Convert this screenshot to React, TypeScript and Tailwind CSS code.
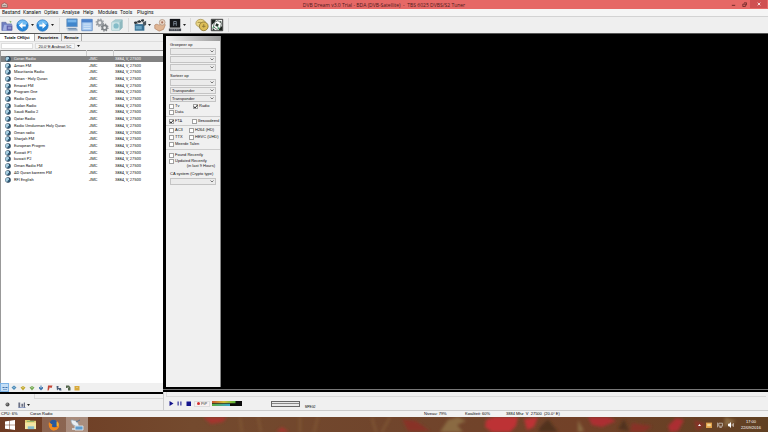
import React from "react";
import { clsx } from "clsx";

const menuItems = [
  { label: "Bestand", width: "w-[21px]" },
  { label: "Kanalen", width: "w-[21px]" },
  { label: "Opties", width: "w-[18px]" },
  { label: "Analyse", width: "w-[21px]" },
  { label: "Help", width: "w-[15px]" },
  { label: "Modules", width: "w-[22px]" },
  { label: "Tools", width: "w-[17px]" },
  { label: "Plugins", width: "w-[20px]" },
];

const channels = [
  "Coran Radio",
  "Aman FM",
  "Mauritania Radio",
  "Oman - Holy Quran",
  "Emarat FM",
  "Program One",
  "Radio Quran",
  "Sudan Radio",
  "Saudi Radio 2",
  "Qatar Radio",
  "Radio Umdurman Holy Quran",
  "Oman radio",
  "Sharjah FM",
  "European Progrm",
  "Kuwait P1",
  "kuwait P2",
  "Oman Radio FM",
  "AD Quran kareem FM",
  "RFI English",
];

/* ---------- toolbar drawings ---------- */

function FolderIcon() {
  return (
    <svg viewBox="0 0 16 16" className="size-[13px]">
      <path d="M1 4h5l1 2h6v8H1z" fill="#6f7fc0" stroke="#56639c" strokeWidth=".7" />
      <path d="M4 7h10l-2 7H2z" fill="#a3b0e2" />
      <path d="M7 8h7v6H7z" fill="#5f62ac" />
      <path d="M8.500 9.500h4v3h-4z" fill="#8f93cc" />
      <path d="M10 2l3 1-1 2z" fill="#78b25a" />
    </svg>
  );
}

function ArrowIcon({ forward }: { forward?: boolean }) {
  return (
    <svg viewBox="0 0 16 16" className="size-[13px]">
      <circle cx="8" cy="8" r="7" fill="#2786d8" stroke="#2a73ba" strokeWidth=".8" />
      <path d="M2 6a6.300 6.300 0 0 1 12 0c-4 1.500-8 1.500-12 0z" fill="#6dbaf2" />
      <path
        d={forward ? "M4 6.700h4V4l4.500 4L8 12V9.300H4z" : "M12 6.700H8V4L3.500 8 8 12V9.300h4z"}
        fill="#fff"
      />
    </svg>
  );
}

function MonitorsIcon() {
  return (
    <svg viewBox="0 0 16 16" className="size-[14px]">
      <path d="M2 1h12v9H2z" fill="#3f86cc" stroke="#7297bb" strokeWidth=".8" />
      <path d="M3 2h10v3H3z" fill="#76b4ea" />
      <path d="M1 11h13l1 4H3z" fill="#c9d6e4" />
      <path d="M3 12h10M4 13.500h10" stroke="#53799f" strokeWidth=".8" />
    </svg>
  );
}

function ListIcon() {
  return (
    <svg viewBox="0 0 16 16" className="size-[14px]">
      <path d="M2 1.500h12v13H2z" fill="#a9cbf0" stroke="#5c86c0" strokeWidth=".9" />
      <path d="M2 1.500h12V5H2z" fill="#4d83cc" />
      <path d="M4 7h8M4 9.500h8M4 12h8" stroke="#d5e6f8" />
    </svg>
  );
}

function GearsIcon() {
  return (
    <svg viewBox="0 0 16 16" className="size-[14px]">
      <g fill="none" stroke="#9a9ea2">
        <circle cx="5.500" cy="5.500" r="2.700" strokeWidth="2" />
        <circle cx="5.500" cy="5.500" r="4.200" strokeWidth="1.400" strokeDasharray="1.600 1.700" />
        <circle cx="11" cy="11" r="2.500" strokeWidth="2" stroke="#7e8387" />
        <circle cx="11" cy="11" r="3.900" strokeWidth="1.400" strokeDasharray="1.500 1.560" stroke="#7e8387" />
      </g>
    </svg>
  );
}

function CubeIcon() {
  return (
    <svg viewBox="0 0 16 16" className="size-[14px]">
      <path d="M2 5l4-3h8v9l-3 3H2z" fill="#a9cfd4" stroke="#8fb5bc" strokeWidth=".7" />
      <path d="M2 5h9v9H2z" fill="#cde4e6" />
      <circle cx="7" cy="9" r="3" fill="#83bcc8" />
      <path d="M11 5l3-3v9l-3 3z" fill="#8fb9bf" />
    </svg>
  );
}

function ClapperIcon() {
  return (
    <svg viewBox="0 0 16 16" className="size-[14px]">
      <path d="M1 4.500L12 1l.8 2.600L2 7z" fill="#2d3338" />
      <path d="M4 3.600l2 2M8 2.300l2 2" stroke="#eee" />
      <path d="M2 7h11v7.500H2z" fill="#376f93" />
      <path d="M3 9h7v4H3z" fill="#6ea6c4" />
      <path d="M11 5l4-2v5l-3 1z" fill="#4b565e" />
    </svg>
  );
}

function HandIcon() {
  return (
    <svg viewBox="0 0 16 16" className="size-[14px]">
      <path d="M2 8c2-2 4 0 5 0l5-4 2 4-2 5-5 2-5-3z" fill="#dfb492" stroke="#ab7c5c" strokeWidth=".7" />
      <circle cx="10.500" cy="5" r="3.300" fill="#ead6c6" stroke="#a98e78" strokeWidth=".8" />
      <circle cx="10.500" cy="5" r="1.200" fill="#a8705a" />
    </svg>
  );
}

function ScreenIcon() {
  return (
    <svg viewBox="0 0 16 16" className="size-[14px]">
      <path d="M2 1h12v10H2z" fill="#15171b" />
      <path d="M6.500 9V4h3v5M6.500 6.500h3" fill="none" stroke="#7d8896" />
      <path d="M1 12h14v3H1z" fill="#43474e" />
      <path d="M3 13.500h10" stroke="#aeb4bb" strokeDasharray="1 1" />
    </svg>
  );
}

function DiscIcon() {
  return (
    <svg viewBox="0 0 16 16" className="size-[14px]">
      <ellipse cx="6.500" cy="6" rx="5.500" ry="4.500" fill="#ead583" stroke="#a08b48" strokeWidth=".8" />
      <circle cx="10" cy="9.500" r="5" fill="#dcbd56" stroke="#84702e" strokeWidth=".9" />
      <path d="M8 9.500h4M10 7v4" stroke="#8b7636" />
      <path d="M3 5h4" stroke="#a18a3e" />
    </svg>
  );
}

function BallIcon() {
  return (
    <svg viewBox="0 0 16 16" className="size-[14px]">
      <path d="M1.500 1.500h13v13h-13z" fill="#f2f4f2" stroke="#222" />
      <path d="M2 2h5L5 5 2 8zM14 14h-4l1-3 3-2z" fill="#1e2420" />
      <path d="M5 5l4-2 4 3-1 5-4 2-4-3z" fill="#fff" stroke="#2c3a32" strokeWidth=".8" />
      <path d="M7 6l3 1-1 3-3-1zM11 3l2 1v2zM3 11l3 3H3z" fill="#26352c" />
      <path d="M5 10l-2 1M9 10l1 3" stroke="#3b9d5c" strokeWidth="1.200" />
    </svg>
  );
}

function GlobeIcon() {
  return (
    <svg viewBox="0 0 12 12" className="size-[6px]">
      <circle cx="6" cy="6" r="5.500" fill="#1e3a52" />
      <path d="M1 6c0-4 5-6 7-3S6 6 5 9 1 8 1 6z" fill="#a7cfe2" />
      <circle cx="8" cy="8" r="1.500" fill="#4486a8" />
    </svg>
  );
}

function ToolButton({ label, children }: { label: string; children: React.ReactNode }) {
  return (
    <button type="button" aria-label={label} className="flex w-[15px] shrink-0 items-center justify-center">
      {children}
    </button>
  );
}

function DropArrow({ label }: { label: string }) {
  return (
    <button type="button" aria-label={label} className="flex w-[5px] shrink-0 items-center justify-center">
      <svg viewBox="0 0 6 4" className="h-[2px] w-[3px]">
        <path d="M0 0h6L3 4z" fill="#222" />
      </svg>
    </button>
  );
}

function Separator({ width }: { width: string }) {
  return (
    <div className={clsx("flex shrink-0 justify-center py-px", width)}>
      <div className="w-px bg-[#dadada]" />
    </div>
  );
}

/* ---------- window parts ---------- */

function TitleBar() {
  return (
    <header className="grid h-[9px] shrink-0 grid-cols-[1fr_auto_1fr] items-center bg-[#e66866]">
      <svg viewBox="0 0 12 10" className="ml-px h-[6px] w-[7px]">
        <path d="M1 4l5-3 5 3v5H1z" fill="#d9c5bd" stroke="#7e5450" />
        <path d="M3 6h6" stroke="#555" />
      </svg>
      <h1 className="whitespace-pre font-['Open_Sans',sans-serif] text-[5px] leading-[8px] text-[#4c1a1a]">
        {"DVB Dream v3.0 Trial - BDA (DVB-Satellite)  -  TBS 6025 DVBS/S2 Tuner"}
      </h1>
      <div className="flex h-[8px] items-center justify-self-end self-start">
        <button type="button" aria-label="Minimize" className="flex w-[12px] justify-center">
          <svg viewBox="0 0 6 6" className="size-[5px]">
            <path d="M1 4h4" stroke="#5a1f1f" />
          </svg>
        </button>
        <button type="button" aria-label="Restore" className="flex w-[11px] justify-center">
          <svg viewBox="0 0 6 6" className="size-[5px]">
            <path d="M1 2.500h3v3H1zM2.500 1h3v3" fill="none" stroke="#5a1f1f" strokeWidth=".9" />
          </svg>
        </button>
        <button type="button" aria-label="Close" className="mr-px flex h-[8px] w-[17px] items-center justify-center bg-[#cf5052]">
          <svg viewBox="0 0 6 6" className="size-[4px]">
            <path d="M1 1l4 4M5 1L1 5" stroke="#f6dada" strokeWidth="1.500" />
          </svg>
        </button>
      </div>
    </header>
  );
}

function MenuBar() {
  return (
    <nav className="flex h-[8px] shrink-0 items-center border-b border-[#d3d3d3] bg-[#f5f5f5] pl-[2px] font-[Roboto,sans-serif] text-[5px] leading-[7px] text-[#111]">
      {menuItems.map((item) => (
        <button type="button" key={item.label} className={clsx("shrink-0 text-left", item.width)}>
          {item.label}
        </button>
      ))}
    </nav>
  );
}

function ToolBar() {
  return (
    <div className="flex h-[17px] shrink-0 items-stretch border-b border-[#555] bg-[#efefef]">
      <ToolButton label="Open"><FolderIcon /></ToolButton>
      <ToolButton label="Back"><ArrowIcon /></ToolButton>
      <DropArrow label="Back history" />
      <ToolButton label="Forward"><ArrowIcon forward /></ToolButton>
      <DropArrow label="Forward history" />
      <Separator width="w-[9px]" />
      <ToolButton label="View"><MonitorsIcon /></ToolButton>
      <ToolButton label="Channel list"><ListIcon /></ToolButton>
      <ToolButton label="Settings"><GearsIcon /></ToolButton>
      <ToolButton label="Modules"><CubeIcon /></ToolButton>
      <Separator width="w-[8px]" />
      <ToolButton label="Record"><ClapperIcon /></ToolButton>
      <DropArrow label="Record options" />
      <ToolButton label="Scan"><HandIcon /></ToolButton>
      <ToolButton label="Screen"><ScreenIcon /></ToolButton>
      <DropArrow label="Screen options" />
      <Separator width="w-[7px]" />
      <ToolButton label="Satellite"><DiscIcon /></ToolButton>
      <ToolButton label="Sport"><BallIcon /></ToolButton>
      <Separator width="w-[9px]" />
    </div>
  );
}

function ChannelTable() {
  return (
    <div className="flex-1 border-l border-[#999] bg-white">
      <table className="h-[133px] w-full table-fixed border-collapse font-[Roboto,sans-serif] text-[4px] leading-[6px] text-[#111]">
        <colgroup>
          <col className="w-[85px]" />
          <col className="w-[27px]" />
          <col />
        </colgroup>
        <thead>
          <tr className="h-[5px] border-t border-[#888] bg-[#f1f1f1]">
            <th aria-label="Naam" className="border-r border-[#ccc] p-0" />
            <th aria-label="Provider" className="border-r border-[#ccc] p-0" />
            <th aria-label="Transponder" className="p-0" />
          </tr>
        </thead>
        <tbody>
          {channels.map((name, i) => (
            <tr key={name} className={clsx(i === 0 && "bg-[#828282] text-[#f2f2f2]")}>
              <td className="p-0 pl-[4px]">
                <div className="flex items-center gap-[3px] whitespace-nowrap">
                  <GlobeIcon />
                  {name}
                </div>
              </td>
              <td className="p-0 pl-[3px]">JMC</td>
              <td className="p-0 pl-[2px]">3884, V, 27500</td>
            </tr>
          ))}
        </tbody>
      </table>
    </div>
  );
}

const listTools = [
  { label: "Lijst", shape: "M1 4h10v2H1zM2 8h8v1H2z", color: "#3e73b0" },
  { label: "Blauw", shape: "M1 5l5-4 5 4-5 5z", color: "#4e8dba" },
  { label: "Geel", shape: "M1 5l5-3 5 3-5 6z", color: "#c2a82e" },
  { label: "Groen", shape: "M1 5l5-3 5 3-5 6z", color: "#75aa54" },
  { label: "Info", shape: "M5 1h2v3h3v3l-4 4-4-4V4h3z", color: "#4277ae" },
  { label: "Vlag", shape: "M2 1h9L9 6H5l-2 5H1z", color: "#c34536" },
  { label: "Zoek", shape: "M1 2h4v4h5l1 5H7L5 8l-3 3z", color: "#4a5d78" },
  { label: "Document", shape: "M2 1h6l3 4v6H6V6H2z", color: "#54664c" },
  { label: "Map", shape: "M1 2h10v9H1z", color: "#d8aa3c" },
];

function ChannelPanel() {
  return (
    <section className="flex w-[163px] shrink-0 flex-col bg-[#f0f0f0]">
      <div role="tablist" className="flex h-[8px] shrink-0 items-stretch border-b border-[#ddd] text-[4px] font-bold leading-[7px] text-black">
        <button type="button" role="tab" aria-selected="true" className="w-[35px] border-r border-[#aaa] bg-white">
          Totale CHlijst
        </button>
        <button type="button" role="tab" aria-selected="false" className="w-[27px] border-r border-[#aaa]">
          Favorieten
        </button>
        <button type="button" role="tab" aria-selected="false" className="w-[20px] border-r border-[#aaa]">
          Remote
        </button>
      </div>
      <div className="flex h-[8px] shrink-0 items-center gap-[2px] pl-px text-[4px] leading-[6px] text-[#111]">
        <input type="text" aria-label="Zoeken" className="h-[6px] w-[32px] border border-[#ddd] bg-white p-0" />
        <button type="button" className="h-[6px] w-[40px] border border-[#ddd] bg-[#f6f6f6] leading-[5px] whitespace-nowrap">
          20.0°E Arabsat 5C
        </button>
        <svg viewBox="0 0 6 4" className="h-[2px] w-[3px]">
          <path d="M0 0h6L3 4z" fill="#222" />
        </svg>
      </div>
      <ChannelTable />
      <div className="flex h-[9px] shrink-0 items-start">
        {listTools.map((tool, i) => (
          <button
            type="button"
            key={tool.label}
            aria-label={tool.label}
            className={clsx(
              "flex size-[9px] shrink-0 items-center justify-center",
              i === 0 && "border border-[#7eb4e6] bg-[#c4def5]"
            )}
          >
            <svg viewBox="0 0 12 12" className="size-[6px]">
              <path d={tool.shape} fill={tool.color} />
              <path d="M4 5h4" stroke="#fff" strokeOpacity=".6" />
            </svg>
          </button>
        ))}
      </div>
      <div className="h-[2px] shrink-0 bg-black" />
      <div className="flex h-[16px] shrink-0 flex-col">
        <div className="ml-[34px] h-[5px] border-b border-l border-[#d8d8d8]" />
        <div className="flex flex-1 items-center gap-[8px] pl-[5px]">
          <button type="button" aria-label="Volume">
            <svg viewBox="0 0 10 10" className="size-[5px]">
              <circle cx="5" cy="5" r="4" fill="#555" />
              <circle cx="4" cy="4" r="1.500" fill="#bbb" />
            </svg>
          </button>
          <button type="button" aria-label="Audio" className="flex items-center gap-px">
            <svg viewBox="0 0 12 10" className="h-[6px] w-[8px]">
              <path d="M0 1h3v8H0zM5 3h3v5H5zM9 1h2v8H9z" fill="#6a7084" />
              <path d="M0 9.500h12" stroke="#3b57a0" />
            </svg>
            <svg viewBox="0 0 6 4" className="h-[2px] w-[3px]">
              <path d="M0 0h6L3 4z" fill="#222" />
            </svg>
          </button>
        </div>
      </div>
    </section>
  );
}

function FilterSelect({ label, value = "" }: { label: string; value?: string }) {
  return (
    <div className="grid h-[8px] items-center pb-px">
      <select
        aria-label={label}
        className="col-start-1 row-start-1 h-[7px] w-full appearance-none border border-[#c4c4c4] bg-[#ebebeb] py-0 pl-px text-[4px] leading-[5px]"
      >
        <option>{value}</option>
      </select>
      <svg viewBox="0 0 8 6" className="pointer-events-none col-start-1 row-start-1 mr-[2px] h-[3px] w-[4px] justify-self-end">
        <path d="M1 1l3 3 3-3" fill="none" stroke="#444" strokeWidth="1.400" />
      </svg>
    </div>
  );
}

function Check({ label, checked }: { label: string; checked?: boolean }) {
  return (
    <label className="flex items-center gap-px whitespace-nowrap">
      <span className="grid size-[5px] shrink-0">
        <input
          type="checkbox"
          defaultChecked={checked}
          className="peer col-start-1 row-start-1 size-[5px] appearance-none border border-[#a0a0a0] bg-white"
        />
        <svg viewBox="0 0 10 10" className="pointer-events-none invisible col-start-1 row-start-1 size-[5px] peer-checked:visible">
          <path d="M2 5l2 3 5-6" fill="none" stroke="#111" strokeWidth="1.800" />
        </svg>
      </span>
      {label}
    </label>
  );
}

function FilterPanel() {
  return (
    <aside className="mt-[2px] flex w-[55px] shrink-0 flex-col border-r border-[#888] bg-[#f0f0f0] text-[4px] leading-[6px] text-[#111]">
      <div className="h-[5px] shrink-0 bg-linear-to-r from-[#f2f2f2] to-[#9a9a9a]" />
      <div className="mt-px flex flex-col px-[4px]">
        <p className="h-[6px]">Groepeer op</p>
        <FilterSelect label="Groepeer op 1" />
        <FilterSelect label="Groepeer op 2" />
        <FilterSelect label="Groepeer op 3" />
        <p className="my-px h-[5px] leading-[6px]">Sorteer op</p>
        <FilterSelect label="Sorteer op 1" />
        <FilterSelect label="Sorteer op 2" value="Transponder" />
        <FilterSelect label="Sorteer op 3" value="Transponder" />
      </div>
      <div className="grid grid-cols-[24px_1fr] border-b border-[#ccc] pb-px pl-[3px]">
        <Check label="Tv" />
        <Check label="Radio" checked />
        <Check label="Data" />
      </div>
      <div className="grid grid-cols-[23px_1fr] border-b border-[#ccc] py-px pl-[3px] font-[Roboto,sans-serif]">
        <Check label="FTA" checked />
        <Check label="Gescodeerd" />
      </div>
      <div className="grid grid-cols-[20px_1fr] gap-y-px border-b border-[#ccc] pt-px pb-[2px] pl-[3px]">
        <Check label="AC3" />
        <Check label="H264 (HD)" />
        <Check label="TTX" />
        <Check label="HEVC (UHD)" />
        <div className="col-span-2">
          <Check label="Meerde Talen" />
        </div>
      </div>
      <div className="flex flex-col pt-[2px] pl-[3px]">
        <Check label="Found Recently" />
        <Check label="Updated Recently" />
        <p className="pr-[5px] text-right leading-[4px]">(in last 9 Hours)</p>
      </div>
      <div className="mt-[3px] flex flex-col gap-px px-[4px]">
        <p className="whitespace-nowrap">CA system (Crypto type)</p>
        <FilterSelect label="CA system" />
      </div>
    </aside>
  );
}

function PlayerBar() {
  return (
    <div className="flex h-[18px] shrink-0 flex-col border-l border-[#ccc] bg-[#f0f0f0]">
      <div className="mx-[2px] h-[5px] shrink-0 border-b border-l border-[#dadada]" />
      <div className="flex flex-1 items-center pl-[5px] text-[4px] leading-[6px]">
        <button type="button" aria-label="Play" className="w-[8px]">
          <svg viewBox="0 0 10 10" className="size-[5px]">
            <path d="M1 0l8 5-8 5z" fill="#14148c" />
          </svg>
        </button>
        <button type="button" aria-label="Pause" className="w-[9px]">
          <svg viewBox="0 0 10 10" className="size-[5px]">
            <path d="M1 1h2.500v8H1zM6.500 1H9v8H6.500z" fill="#3b3b9c" />
          </svg>
        </button>
        <button type="button" aria-label="Stop" className="w-[8px]">
          <svg viewBox="0 0 10 10" className="size-[5px]">
            <path d="M1 1h9v9H1z" fill="#14148c" />
          </svg>
        </button>
        <button type="button" className="flex h-[6px] w-[16px] items-center justify-center gap-px border border-[#ddd] bg-[#f8f0f0] text-[#333]">
          <span className="size-[3px] rounded-full bg-[#d33030]" />
          PiP
        </button>
        <svg viewBox="0 0 60 10" preserveAspectRatio="none" className="ml-[2px] h-[5px] w-[30px]">
          <defs>
            <linearGradient id="level">
              <stop offset="0" stopColor="#c8552c" />
              <stop offset=".5" stopColor="#d0bf37" />
              <stop offset="1" stopColor="#56b53a" />
            </linearGradient>
            <linearGradient id="quality">
              <stop offset="0" stopColor="#5bae3d" />
              <stop offset="1" stopColor="#3ba9cf" />
            </linearGradient>
          </defs>
          <path d="M0 0h60v10H0z" fill="#0c0c0c" />
          <path d="M0 0h47v4.500H0z" fill="url(#level)" />
          <path d="M0 5.500h36v4.500H0z" fill="url(#quality)" />
        </svg>
        <div className="ml-[29px] flex h-[6px] w-[29px] items-center border border-[#666] bg-[#e8e8e8]">
          <div className="h-px w-full bg-[#888]" />
        </div>
        <span className="ml-[5px] self-end text-[3px] leading-[5px] text-black">MPEG2</span>
      </div>
    </div>
  );
}

function StatusBar() {
  return (
    <footer className="flex h-[7px] shrink-0 items-center border-t border-[#ccc] bg-[#f2f2f2] pl-px text-[4px] leading-[6px] text-black">
      <span className="w-[29px]">CPU: 6%</span>
      <span className="flex-1">Coran Radio</span>
      <span className="w-[41px]">Niveau: 79%</span>
      <span className="w-[41px]">Kwaliteit: 60%</span>
      <span className="w-[262px] whitespace-pre">{"3884 Mhz  V  27500  (20.0° E)"}</span>
    </footer>
  );
}

function Wallpaper() {
  return (
    <svg viewBox="0 0 768 15" preserveAspectRatio="none" className="col-start-1 row-start-1 h-[15px] w-full">
      <defs>
        <linearGradient id="wood">
          <stop offset="0" stopColor="#6d3a22" />
          <stop offset=".25" stopColor="#744a2e" />
          <stop offset=".5" stopColor="#70452c" />
          <stop offset=".75" stopColor="#724128" />
          <stop offset="1" stopColor="#604022" />
        </linearGradient>
        <filter id="soft" x="-20%" y="-50%" width="140%" height="200%">
          <feGaussianBlur stdDeviation="1.500" />
        </filter>
      </defs>
      <path d="M0 0h768v15H0z" fill="url(#wood)" />
      <g filter="url(#soft)">
        <path d="M203 0h24l-4 5-12 2zM276 15l6-5 7 5z" fill="#a4352d" />
        <path d="M486 3l8-3h24l-2 9-6 6h-18l-7-5zM524 2l14-2-4 10-7 3z" fill="#bd3035" />
        <path d="M588 0h20l8 4-14 6-10-2zM668 9l8-8 8 2-6 11-8 1z" fill="#ac2f30" />
        <path d="M402 2l14 2 14 10h-22zM632 6l20 3-8 6h-14zM694 3l12 4-9 7z" fill="#883128" />
        <path d="M440 15l8-12 10-3 8 4-9 4 6 7zM550 1l15 12M578 15V3l6 11zM725 0l11 4-12 6z" fill="#8a6a42" />
        <path d="M240 1l2 14M258 0l3 15M300 0v15M318 0l-4 15M372 1l4 14M390 0l-8 15" stroke="#805735" strokeWidth="2" />
        <path d="M540 10l8-8 10 13h-20zM618 12l6-10 5 12z" fill="#51331e" />
      </g>
    </svg>
  );
}

function TaskBar() {
  return (
    <div className="grid h-[15px] shrink-0 overflow-hidden">
      <Wallpaper />
      <div className="z-10 col-start-1 row-start-1 flex items-stretch">
        <button type="button" aria-label="Start" className="flex w-[19px] items-center justify-center">
          <svg viewBox="0 0 10 10" className="size-[10px]">
            <path d="M0 1.400l4.500-.6v4H0zM5 .7L10 0v4.800H5zM0 5.300h4.500v4L0 8.700zM5 5.300h5V10l-5-.7z" fill="#fff" />
          </svg>
        </button>
        <button type="button" aria-label="Explorer" className="flex w-[23px] items-center justify-center">
          <svg viewBox="0 0 14 12" className="h-[11px] w-[13px]">
            <path d="M1 1h5l1 1h6v9H1z" fill="#e4cf75" />
            <path d="M1 4h12v7H1z" fill="#f3e6a4" />
            <path d="M4 8h7v3H4z" fill="#86bbc8" />
            <path d="M3 2.500h8" stroke="#76ac6b" />
          </svg>
        </button>
        <button type="button" aria-label="Firefox" className="flex w-[24px] items-center justify-center bg-white/20">
          <svg viewBox="0 0 14 14" className="size-[12px]">
            <circle cx="7" cy="7" r="6" fill="#e2701d" />
            <circle cx="6.500" cy="5.500" r="4.500" fill="#28599e" />
            <path d="M1 4c2 0 2 2 4 2 0 2-1 2 0 3s5 2 8-1c0 3-3 5.500-6 5.500S0 10 1 4z" fill="#ed8a20" />
            <path d="M10 3c2 1 3.500 3 2 6l-2-1z" fill="#f2b131" />
          </svg>
        </button>
        <button type="button" aria-label="DVB Dream" className="flex w-[22px] items-center justify-center bg-white/40">
          <svg viewBox="0 0 14 12" className="h-[12px] w-[14px]">
            <path d="M1 1c5 0 7 2 8 6C4 8 1 5 1 1z" fill="#e9eef2" stroke="#93a6b5" strokeWidth=".7" />
            <path d="M6 3l4-2" stroke="#5b7590" />
            <path d="M5 7h8v4H5z" fill="#5f9bcc" stroke="#e5edf2" strokeWidth=".8" />
            <path d="M2 10h3" stroke="#dce4ea" strokeWidth="1.500" />
          </svg>
        </button>
        <div className="ml-auto flex items-center gap-[5px] pr-[5px] text-white">
          <svg viewBox="0 0 6 4" className="h-[2px] w-[3px]">
            <path d="M0 4h6L3 0z" fill="#fff" />
          </svg>
          <svg viewBox="0 0 10 10" className="size-[6px]">
            <path d="M0 1h10v9H0z" fill="#dfa04a" />
            <path d="M2 3h6v4H2z" fill="#f2d797" />
          </svg>
          <svg viewBox="0 0 10 10" className="size-[6px]">
            <path d="M1 1v8M3 2h6v5H3zM4 9h4" fill="none" stroke="#eee" />
          </svg>
          <svg viewBox="0 0 10 10" className="size-[6px]">
            <path d="M0 3h2l3-3v10L2 7H0z" fill="#fff" />
            <path d="M7 3v4M9 2v6" stroke="#fff" />
          </svg>
          <time className="w-[24px] text-center text-[4px] leading-[6px]">
            17:00
            <br />
            22/09/2016
          </time>
        </div>
      </div>
    </div>
  );
}

export default function App() {
  return (
    <div className="flex h-screen flex-col overflow-hidden bg-[#f0f0f0] font-['Liberation_Sans',Arial,sans-serif]">
      <TitleBar />
      <MenuBar />
      <ToolBar />
      <main className="flex min-h-0 flex-1">
        <ChannelPanel />
        <div className="flex min-w-0 flex-1 flex-col">
          <div className="flex min-h-0 flex-1 bg-black pl-[3px]">
            <FilterPanel />
            <div className="flex-1 bg-black" />
          </div>
          <div className="h-[5px] shrink-0 border-y-2 border-black bg-[#777]" />
          <PlayerBar />
        </div>
      </main>
      <StatusBar />
      <TaskBar />
    </div>
  );
}
